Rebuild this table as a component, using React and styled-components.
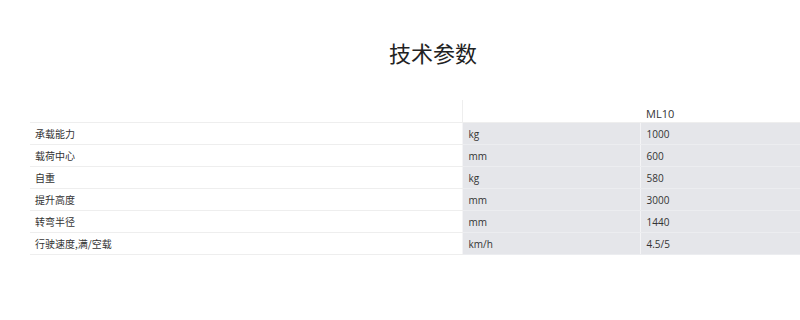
import React from 'react';
import styled, { createGlobalStyle } from 'styled-components';

const GlobalStyle = createGlobalStyle`
  html, body { margin: 0; padding: 0; background: #fff; overflow: hidden; }
  body { font-family: "Open Sans", "Noto Sans CJK SC", sans-serif; color: #333; }
`;

const Page = styled.div`
  width: 100%;
  padding-top: 38px;
`;

const Title = styled.h2`
  margin: 0 0 34px;
  padding-left: 66px;
  text-align: center;
  font-family: "Noto Sans CJK SC", sans-serif;
  font-size: 22px;
  font-weight: 400;
  line-height: 28px;
  color: #222;
`;

const Table = styled.table`
  margin-left: 30px;
  width: calc(100% - 30px);
  border-collapse: collapse;
  table-layout: fixed;
  font-size: 10px;
`;

const HeadCell = styled.th`
  height: 21px;
  padding: 0 6px 1px;
  text-align: left;
  font-weight: 400;
  font-size: 11px;
  color: #333;
  border-bottom: 1px solid #eeeeee;
  border-left: ${(p) => (p.$divider ? '1px solid #eeeeee' : 'none')};
  vertical-align: bottom;
`;

const Cell = styled.td`
  height: 21px;
  padding: 0 ${(p) => (p.$label ? '5px' : '6px')};
  background: ${(p) => (p.$label ? '#fff' : '#e5e6ea')};
  border-bottom: 1px solid ${(p) => (p.$label ? '#eeeeee' : '#ecedf0')};
  border-left: ${(p) => (p.$label ? 'none' : '1px solid #f4f4f6')};
  font-family: ${(p) =>
    p.$label ? '"Noto Sans CJK SC", sans-serif' : '"Open Sans", sans-serif'};
  font-size: 10px;
  color: #333;
  white-space: nowrap;
`;

const rows = [
  ['承载能力', 'kg', '1000'],
  ['载荷中心', 'mm', '600'],
  ['自重', 'kg', '580'],
  ['提升高度', 'mm', '3000'],
  ['转弯半径', 'mm', '1440'],
  ['行驶速度,满/空载', 'km/h', '4.5/5'],
];

export default function App() {
  return (
    <>
      <GlobalStyle />
      <Page>
        <Title>技术参数</Title>
        <Table>
          <colgroup>
            <col style={{ width: 432 }} />
            <col style={{ width: 178 }} />
            <col />
          </colgroup>
          <thead>
            <tr>
              <HeadCell></HeadCell>
              <HeadCell $divider></HeadCell>
              <HeadCell>ML10</HeadCell>
            </tr>
          </thead>
          <tbody>
            {rows.map(([name, unit, value]) => (
              <tr key={name}>
                <Cell $label>{name}</Cell>
                <Cell>{unit}</Cell>
                <Cell>{value}</Cell>
              </tr>
            ))}
          </tbody>
        </Table>
      </Page>
    </>
  );
}
